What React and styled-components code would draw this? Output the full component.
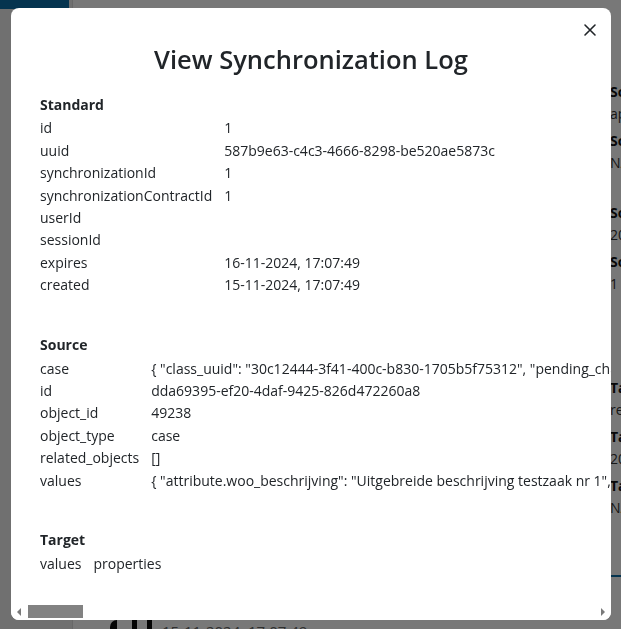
import React, { useLayoutEffect, useRef, useState } from 'react';
import styled, { createGlobalStyle } from 'styled-components';

const GlobalStyle = createGlobalStyle`
  html, body {
    margin: 0;
    padding: 0;
    height: 100%;
  }
  body {
    font-family: "Open Sans", "Noto Sans", sans-serif;
    color: #212529;
    background: #ffffff;
    overflow: hidden;
  }
  #root {
    height: 100%;
  }
`;

/* ---------- page behind the modal ---------- */

const Page = styled.div`
  display: flex;
  height: 100vh;
  overflow: hidden;
  background: #ffffff;
`;

const Sidebar = styled.aside`
  flex: 0 0 72px;
  background: #eeeeee;
  border-right: 1px solid #dedede;
  display: flex;
  flex-direction: column;
`;

const Brand = styled.div`
  height: 9px;
  width: 69px;
  background: #0b6fa9;
`;

const Main = styled.main`
  flex: 1;
  display: flex;
  overflow: hidden;
`;

const LogArea = styled.section`
  flex: 0 0 537px;
  box-sizing: border-box;
  padding: 20px 0 0 37px;
  display: flex;
  flex-direction: column;
`;

const LogRow = styled.div`
  height: 50px;
  flex: 0 0 50px;
  display: flex;
  align-items: flex-start;
  gap: 10px;
`;

const LogDate = styled.span`
  font-size: 15px;
  line-height: 20px;
  padding-top: 1px;
  color: #666666;
`;

const DetailsColumn = styled.section`
  flex: 0 0 220px;
  padding-top: 81px;
  display: flex;
  flex-direction: column;
`;

const DetailGroup = styled.div`
  margin-top: ${(p) => p.$space || 0}px;
  display: flex;
  flex-direction: column;
`;

const DetailItem = styled.div`
  display: flex;
  flex-direction: column;
  margin-bottom: 5px;
`;

const DetailLabel = styled.span`
  font-size: 14px;
  line-height: 22px;
  font-weight: 700;
  color: #111111;
  white-space: nowrap;
`;

const DetailValue = styled.span`
  font-size: 14px;
  line-height: 22px;
  color: #333333;
  white-space: nowrap;
`;

const TabRule = styled.div`
  margin-top: 51px;
  height: 2px;
  background: #0b6fa9;
`;

/* ---------- modal ---------- */

const Overlay = styled.div`
  position: fixed;
  inset: 0;
  box-sizing: border-box;
  padding: 8px 10px 9px 11px;
  background: rgba(0, 0, 0, 0.53);
  display: flex;
`;

const Dialog = styled.div`
  position: relative;
  flex: 1;
  min-width: 0;
  background: #ffffff;
  border-radius: 8px;
  overflow: hidden;
  display: flex;
  flex-direction: column;
`;

const DialogBody = styled.div`
  flex: 1;
  min-height: 0;
  overflow: hidden;
  padding: 26px 29px 0;
`;

const CloseButton = styled.button`
  position: absolute;
  top: 12px;
  right: 11px;
  width: 20px;
  height: 20px;
  padding: 0;
  border: 0;
  background: transparent;
  color: #212529;
  cursor: pointer;
  display: flex;
  align-items: center;
  justify-content: center;
`;

const Title = styled.h2`
  margin: 10px 0 19px;
  font-size: 25.5px;
  line-height: 1.2;
  font-weight: 600;
  text-align: center;
  color: #212529;
`;

const Sections = styled.div`
  display: flex;
  flex-direction: column;
  align-items: flex-start;
  gap: 37.4px;
`;

const Section = styled.section`
  display: flex;
  flex-direction: column;
  align-items: flex-start;
`;

const SectionTitle = styled.h3`
  margin: 0 0 1.3px;
  font-size: 14px;
  line-height: 22.4px;
  font-weight: 700;
  color: #212529;
`;

const KVTable = styled.table`
  border-collapse: collapse;
  font-size: 14px;
  line-height: 22.4px;
  color: #212529;
`;

const KeyCell = styled.td`
  padding: 0 12px 0 0;
  white-space: nowrap;
  vertical-align: top;
`;

const ValueCell = styled.td`
  padding: 0;
  white-space: nowrap;
  vertical-align: top;
`;

/* horizontal scrollbar of the dialog */

const HScrollbar = styled.div`
  flex: 0 0 16px;
  display: flex;
  background: #ffffff;
`;

const ScrollArrow = styled.div`
  flex: 0 0 16px;
  display: flex;
  align-items: center;
  justify-content: center;
  color: #7a7a7a;
`;

const ScrollTrack = styled.div`
  flex: 1;
  display: flex;
  box-sizing: border-box;
  padding: 1px 1px 2px;
`;

const ScrollThumb = styled.div`
  flex: 0 0 auto;
  background: #828282;
`;

/* ---------- data ---------- */

const formatInline = (v) => {
  if (v === null) return 'null';
  if (Array.isArray(v)) return v.length ? `[ ${v.map(formatInline).join(', ')} ]` : '[]';
  if (typeof v === 'object') {
    return `{ ${Object.entries(v)
      .map(([k, val]) => `"${k}": ${formatInline(val)}`)
      .join(', ')} }`;
  }
  if (typeof v === 'string') return `"${v}"`;
  return String(v);
};

const caseObject = {
  class_uuid: '30c12444-3f41-400c-b830-1705b5f75312',
  pending_changes: null,
  number: 49238,
  status: 'open',
  subject: 'Testzaak nr 1',
  summary: 'Testzaak nr 1 voor publicatie',
  registration_date: '2024-11-15',
  target_completion_date: '2024-12-13',
  completion_date: null,
  milestone: 1,
  phase: 'Registreren',
  confidentiality: 'public',
  contact_channel: 'behandelaar',
  location: null,
  case_type_uuid: '6a2b1c3e-9f4d-4b7a-8e21-0c5d3f9a7b14',
  case_type_version_uuid: 'b7e0a5d2-1c84-4f3e-9a6b-2d8f7c1e0a93',
  requestor: { type: 'employee', uuid: 'f3c9d1a8-5e2b-4c7f-b061-9a4d8e2c7f35' },
  assignee: { type: 'employee', uuid: 'f3c9d1a8-5e2b-4c7f-b061-9a4d8e2c7f35' },
  department: { type: 'department', uuid: '2e8b4f1c-7a3d-4e9b-a5c0-6d1f8b3e2a74' },
  role: { type: 'role', uuid: '9c1e7a4b-3d2f-4a8e-b6f0-5e7d2c9a1b83' },
  result: null,
  archival_state: null,
  destruction_date: null,
};

const valuesObject = {
  'attribute.woo_beschrijving': 'Uitgebreide beschrijving testzaak nr 1',
  'attribute.woo_publicatiedatum': '2024-11-15',
  'attribute.woo_informatiecategorie': 'Overige besluiten van algemene strekking',
  'attribute.woo_thema': 'Bestuur',
  'attribute.woo_samenvatting': 'Samenvatting testzaak nr 1',
  'attribute.woo_inventarisatielijst': [],
  'attribute.woo_besluit': [],
  'attribute.woo_publiceren': 'Ja',
};

const standardRows = [
  ['id', '1'],
  ['uuid', '587b9e63-c4c3-4666-8298-be520ae5873c'],
  ['synchronizationId', '1'],
  ['synchronizationContractId', '1'],
  ['userId', ''],
  ['sessionId', ''],
  ['expires', '16-11-2024, 17:07:49'],
  ['created', '15-11-2024, 17:07:49'],
];

const sourceRows = [
  ['case', formatInline(caseObject)],
  ['id', 'dda69395-ef20-4daf-9425-826d472260a8'],
  ['object_id', '49238'],
  ['object_type', 'case'],
  ['related_objects', '[]'],
  ['values', formatInline(valuesObject)],
];

const targetRows = [['values', 'properties']];

const detailGroups = [
  {
    space: 0,
    items: [
      ['Schema', 'api-zaaksysteem'],
      ['Schema hash', 'N/A'],
    ],
  },
  {
    space: 23,
    items: [
      ['Source last changed', '2024-11-15 17:07'],
      ['Source last checked', '1'],
    ],
  },
  {
    space: 77,
    items: [
      ['Target', 'register'],
      ['Target last changed', '2024-11-15 17:07'],
      ['Target hash', 'N/A'],
    ],
  },
];

/* ---------- components ---------- */

const LogIcon = () => (
  <svg width="42" height="30" viewBox="0 0 42 30" aria-hidden="true">
    <path d="M7 0 A7 7 0 0 0 0 7 L0 30 L7 30 Z" fill="#0a0a0a" />
    <rect x="22" y="0" width="5" height="9" fill="#0a0a0a" />
    <rect x="22" y="12" width="5" height="18" fill="#0a0a0a" />
    <rect x="37" y="0" width="5" height="30" fill="#0a0a0a" />
  </svg>
);

const CloseIcon = () => (
  <svg width="20" height="20" viewBox="0 0 20 20" aria-hidden="true">
    <path
      d="M5 5 L15 15 M15 5 L5 15"
      stroke="currentColor"
      strokeWidth="1.6"
      strokeLinecap="round"
      fill="none"
    />
  </svg>
);

const ArrowIcon = ({ dir }) => (
  <svg width="4" height="8" viewBox="0 0 4 8" aria-hidden="true">
    <path d={dir === 'left' ? 'M4 0 L0 4 L4 8 Z' : 'M0 0 L4 4 L0 8 Z'} fill="currentColor" />
  </svg>
);

const KeyValueSection = ({ title, rows }) => (
  <Section>
    <SectionTitle>{title}</SectionTitle>
    <KVTable>
      <tbody>
        {rows.map(([k, v], i) => (
          <tr key={k + i}>
            <KeyCell>{k}</KeyCell>
            <ValueCell>{v}</ValueCell>
          </tr>
        ))}
      </tbody>
    </KVTable>
  </Section>
);

export default function App() {
  const bodyRef = useRef(null);
  const trackRef = useRef(null);
  const [thumbWidth, setThumbWidth] = useState(55);

  useLayoutEffect(() => {
    const body = bodyRef.current;
    const track = trackRef.current;
    if (!body || !track) return;
    const inner = track.clientWidth - 2;
    const ratio = body.clientWidth / Math.max(body.scrollWidth, 1);
    setThumbWidth(Math.max(17, Math.round(inner * ratio)));
  }, []);

  return (
    <>
      <GlobalStyle />
      <Page>
        <Sidebar>
          <Brand />
        </Sidebar>
        <Main>
          <LogArea>
            {Array.from({ length: 14 }).map((_, i) => (
              <LogRow key={i}>
                <LogIcon />
                <LogDate>15-11-2024, 17:07:49</LogDate>
              </LogRow>
            ))}
          </LogArea>
          <DetailsColumn>
            {detailGroups.map((g, gi) => (
              <DetailGroup key={gi} $space={g.space}>
                {g.items.map(([label, value]) => (
                  <DetailItem key={label}>
                    <DetailLabel>{label}</DetailLabel>
                    <DetailValue>{value}</DetailValue>
                  </DetailItem>
                ))}
              </DetailGroup>
            ))}
            <TabRule />
          </DetailsColumn>
        </Main>
      </Page>
      <Overlay>
        <Dialog role="dialog" aria-modal="true">
          <CloseButton aria-label="Close">
            <CloseIcon />
          </CloseButton>
          <DialogBody ref={bodyRef}>
            <Title>View Synchronization Log</Title>
            <Sections>
              <KeyValueSection title="Standard" rows={standardRows} />
              <KeyValueSection title="Source" rows={sourceRows} />
              <KeyValueSection title="Target" rows={targetRows} />
            </Sections>
          </DialogBody>
          <HScrollbar>
            <ScrollArrow>
              <ArrowIcon dir="left" />
            </ScrollArrow>
            <ScrollTrack ref={trackRef}>
              <ScrollThumb style={{ width: thumbWidth }} />
            </ScrollTrack>
            <ScrollArrow>
              <ArrowIcon dir="right" />
            </ScrollArrow>
          </HScrollbar>
        </Dialog>
      </Overlay>
    </>
  );
}
